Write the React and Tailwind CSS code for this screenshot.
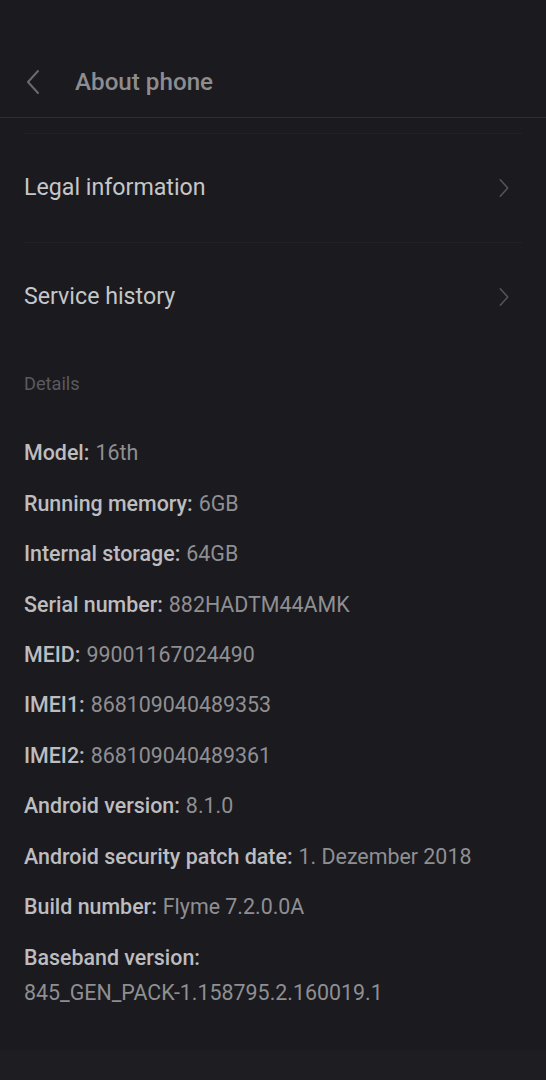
import React from "react";

const rows = [
  ["Model:", "16th"],
  ["Running memory:", "6GB"],
  ["Internal storage:", "64GB"],
  ["Serial number:", "882HADTM44AMK"],
  ["MEID:", "99001167024490"],
  ["IMEI1:", "868109040489353"],
  ["IMEI2:", "868109040489361"],
  ["Android version:", "8.1.0"],
  ["Android security patch date:", "1. Dezember 2018"],
  ["Build number:", "Flyme 7.2.0.0A"],
];

function Chevron({ dir = "right", className = "" }) {
  return (
    <svg viewBox="0 0 16 26" className={className} fill="none" stroke="currentColor" strokeWidth="2" strokeLinecap="round" strokeLinejoin="round">
      {dir === "right" ? <path d="M3 2 L13 13 L3 24" /> : <path d="M13 2 L3 13 L13 24" />}
    </svg>
  );
}

export default function App() {
  return (
    <div className="min-h-[1080px] w-[546px] bg-[#1b1a1f] flex flex-col" style={{ fontFamily: "Roboto, 'Noto Sans', sans-serif" }}>
      <div className="h-[118px] border-b border-[#2e2d33] pt-[58px] shrink-0">
        <div className="h-[48px] flex items-center">
          <Chevron dir="left" className="w-[16px] h-[26px] ml-[25px] text-[#6b6b6e]" />
          <span className="ml-[34px] text-[24.2px] font-medium text-[#8d8d90] leading-none">About phone</span>
        </div>
      </div>
      <div className="mt-[15px] mx-6 border-t border-[#222127]" />
      <div className="h-[108px] flex items-center justify-between pl-6 pr-[36px]">
        <span className="text-[23.2px] text-[#c6c6c8] leading-none">Legal information</span>
        <Chevron className="w-[12px] h-[20px] text-[#56565a]" />
      </div>
      <div className="mx-6 border-t border-[#222127]" />
      <div className="h-[108px] flex items-center justify-between pl-6 pr-[36px]">
        <span className="text-[23.2px] text-[#c6c6c8] leading-none">Service history</span>
        <Chevron className="w-[12px] h-[20px] text-[#56565a]" />
      </div>
      <div className="mt-[23px] h-[20px] flex items-center pl-6 text-[18.2px] text-[#5a5a5f]">Details</div>
      <div className="mt-[34px] flex flex-col pl-6">
        {rows.map(([k, v]) => (
          <div key={k} className="h-[50.4px] flex items-center text-[21.4px] leading-none">
            <span className="font-medium text-[#bdbdbf]">{k}</span>
            <span className="ml-[6px] text-[#8f8f92]">{v}</span>
          </div>
        ))}
        <div className="pt-[8px] text-[21.4px] leading-[35px]">
          <div className="font-medium text-[#bdbdbf]">Baseband version:</div>
          <div className="text-[#8f8f92]">845_GEN_PACK-1.158795.2.160019.1</div>
        </div>
      </div>
      <div className="flex-1" />
      <div className="h-[30px] bg-[#1e1d22]" />
    </div>
  );
}
